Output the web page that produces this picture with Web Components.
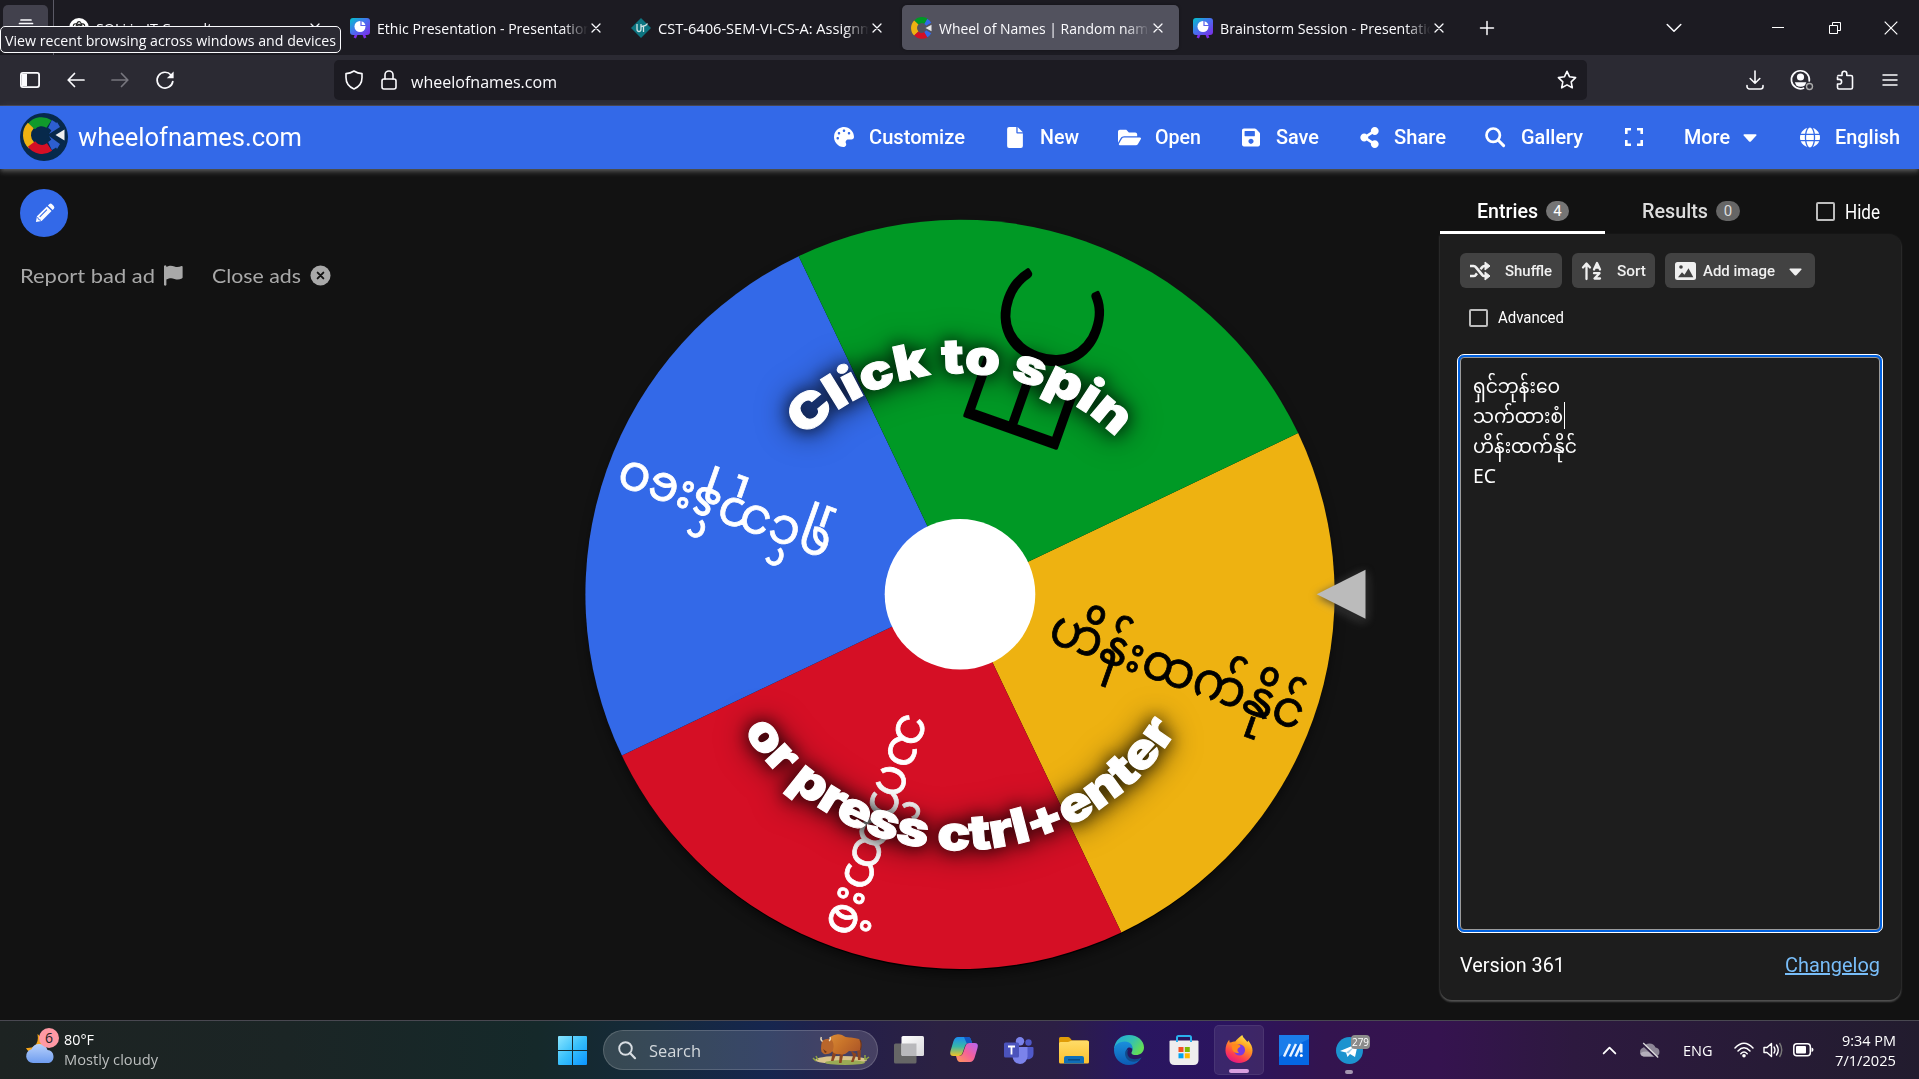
<!DOCTYPE html>
<html lang="en">
<head>
<meta charset="utf-8">
<title>Wheel of Names | Random name picker</title>
<style>
html,body{margin:0;height:100%;background:#121212;overflow:hidden}
body{font-family:"Open Sans","Noto Sans",sans-serif;color:#fbfbfe}
</style>
</head>
<body>
<wheel-desktop></wheel-desktop>
<script>
const S = (vb, body, extra='') => `<svg viewBox="${vb}" ${extra}>${body}</svg>`;
const L = (body, w=1.5) => `<g fill="none" stroke="currentColor" stroke-width="${w}" stroke-linecap="round" stroke-linejoin="round">${body}</g>`;
const deco = `<defs><linearGradient id="d" x1="0" y1="0" x2="1" y2="1"><stop offset="0" stop-color="#00c4cc"/><stop offset=".5" stop-color="#4a6df0"/><stop offset="1" stop-color="#7d2ae8"/></linearGradient></defs><path d="M6.800 15l-2 5M13.200 15l2 5" stroke="#7d2ae8" stroke-width="2.600"/><rect width="20" height="17" rx="3" fill="url(#d)"/><circle cx="10" cy="8.500" r="5.500" fill="#fff"/><path d="M11 2.500v5h5" fill="none" stroke="#5b62ec" stroke-width="1.200"/>`;
const ring = `<g fill="none" stroke-width="6"><path d="M4.300 4.500A8 8 0 0 1 14.500 3.400" stroke="#009925"/><path d="M4.300 4.500A7.800 7.800 0 0 0 4.300 15.500" stroke="#eeb211"/><path d="M4.300 15.500A7.800 7.800 0 0 0 14 16.600" stroke="#d50f25"/><path d="M13.800 16.600A7.800 7.800 0 0 0 16.700 13.700M13.800 3.400A7.800 7.800 0 0 1 16.700 6.300" stroke="#3369e8"/></g><path d="M13.500 10l6-3.200v6.400z" fill="#e6e6e6"/>`;
const ICONS = {
 recent: S('0 0 20 20', L('<path d="M5 2h10M3.500 5.500h13"/><rect x="2" y="9" width="16" height="9" rx="2"/>',1.7)),
 gpt: S('0 0 20 20','<circle cx="10" cy="10" r="10" fill="#fff"/><g fill="none" stroke="#222" stroke-width="1.200"><ellipse cx="10" cy="10" rx="3" ry="6.300"/><ellipse cx="10" cy="10" rx="3" ry="6.300" transform="rotate(60 10 10)"/><ellipse cx="10" cy="10" rx="3" ry="6.300" transform="rotate(120 10 10)"/></g>'),
 deco: S('0 0 20 20', deco),
 ut: S('0 0 20 20','<path d="M10 0l10 10-10 10L0 10z" fill="#0c7480"/><path d="M6 6v5q0 2.500 2 2.500t2-2.500V6M12.500 14V8M10.500 8.500q4 0 6-3" fill="none" stroke="#cfe3e4" stroke-width="1.300"/>'),
 wheel: S('0 0 20 20', ring),
 x: S('0 0 12 12', L('<path d="M1.200 1.200l9.600 9.600M10.800 1.200L1.200 10.800"/>',1.5)),
 plus: S('0 0 14 14', L('<path d="M7 .5v13M.5 7h13"/>',1.5)),
 down: S('0 0 16 10', L('<path d="M1.200 1.500L8 8.300l6.800-6.800"/>',1.5)),
 min: S('0 0 12 12','<path d="M0 5.500h12" stroke="#fff"/>'),
 restore: S('0 0 12 12','<path d="M3.500 3V.500h8v8H9M.500 3.500h8v8h-8z" fill="none" stroke="#fff"/>'),
 wclose: S('0 0 14 14','<path d="M.700.700l12.600 12.600M13.300.700L.700 13.300" stroke="#fff" stroke-width="1.200"/>'),
 sidebar: S('0 0 20 16','<rect x=".9" y=".9" width="18.200" height="14.200" rx="2" fill="none" stroke="currentColor" stroke-width="1.800"/><path d="M2 2h5v12H2z" fill="currentColor"/>'),
 back: S('0 0 18 16', L('<path d="M17 8H1.200M7.500 1.500L1.200 8l6.300 6.500"/>',1.7)),
 fwd: S('0 0 18 16', L('<path d="M1 8h15.800M10.500 1.500L16.800 8l-6.300 6.500"/>',1.7)),
 reload: S('0 0 18 18', L('<path d="M16.800 10.500A7.900 7.900 0 1 1 15 4"/>',1.7)+'<path d="M17.600.5v6.800h-6.800z" fill="currentColor"/>'),
 shield: S('0 0 18 20', L('<path d="M9 1c2.500 1.600 5 2.400 8 2.600v4C17 13 14 17 9 19 4 17 1 13 1 7.600v-4C4 3.400 6.500 2.600 9 1z"/>',1.6)),
 lock: S('0 0 16 20', L('<rect x="1" y="9" width="14" height="10" rx="2"/><path d="M4 9V5a4 4 0 0 1 8 0v4"/>',1.6)),
 star: S('0 0 20 20', L('<path d="M10 1.300l2.600 5.500 6 .8-4.400 4.200 1.100 6L10 14.900l-5.300 2.900 1.100-6L1.400 7.600l6-.8z"/>',1.6)),
 download: S('0 0 18 20', L('<path d="M9 1v12M4.200 8.500L9 13.200l4.800-4.700M1 15.500v1A2.500 2.500 0 0 0 3.500 19h11a2.500 2.500 0 0 0 2.500-2.500v-1"/>',1.6)),
 account: S('0 0 24 22', L('<path d="M13.500 19.200A9 9 0 1 1 19.300 12"/>',1.7)+'<circle cx="10.500" cy="8" r="3.600" fill="currentColor"/><path d="M4.800 13.200h11.600l-1.600 3.200Q10.500 19 6.300 16.400z" fill="currentColor"/><circle cx="19.500" cy="17.500" r="3" fill="none" stroke="#aaa" stroke-width="1.400"/>'),
 puzzle: S('0 0 20 20', L('<path d="M3 5.500h4V3.700a2.400 2.400 0 0 1 4.800 0v1.800H16a1.500 1.500 0 0 1 1.500 1.500v10.500A1.500 1.500 0 0 1 16 19H4a1.500 1.500 0 0 1-1.500-1.500V14h1.800a2.300 2.300 0 0 0 0-4.600H2.500V7"/>',1.6)),
 menu: S('0 0 16 14', L('<path d="M1 2h14M1 7h14M1 12h14"/>',1.5)),
 logo: S('0 0 48 48','<circle cx="24" cy="24" r="24" fill="#07294b"/><g fill="none" stroke-width="9"><path d="M11.500 13.500A13 13 0 0 1 29 11" stroke="#109a2b"/><path d="M10.800 12.500A14 14 0 0 0 11.600 32.500" stroke="#eeb211" stroke-width="8"/><path d="M11.500 31A13 13 0 0 0 29.500 34" stroke="#d50f25"/><path d="M30 33A13 13 0 0 0 35 29M30 11A13 13 0 0 1 35 15" stroke="#2d5fd0"/></g><path d="M29 21l11-7-3-5zM29 23l11 8-3 5z" fill="#2d5fd0"/><circle cx="21" cy="22" r="8" fill="#07294b"/><path d="M35.500 22l9-5.500v11z" fill="#eee"/>'),
 palette: S('0 0 512 512','<path fill="currentColor" d="M204.300 5C104.900 24.400 24.800 104.300 5.200 203.400c-37 187 131.700 326.400 258.800 306.700 41.200-6.400 61.400-54.600 42.500-91.700-23.100-45.400 9.900-98.400 60.900-98.400h79.700c35.800 0 64.800-29.600 64.900-65.300C511.500 97.100 368.100-26.900 204.300 5zM96 320c-17.700 0-32-14.300-32-32s14.300-32 32-32 32 14.300 32 32-14.300 32-32 32zm32-128c-17.700 0-32-14.300-32-32s14.300-32 32-32 32 14.300 32 32-14.300 32-32 32zm128-64c-17.700 0-32-14.300-32-32s14.300-32 32-32 32 14.300 32 32-14.300 32-32 32zm128 64c-17.700 0-32-14.300-32-32s14.300-32 32-32 32 14.300 32 32-14.300 32-32 32z"/>'),
 file: S('0 0 384 512','<path fill="currentColor" d="M224 136V0H48Q0 0 0 48v416q0 48 48 48h288q48 0 48-48V160H248q-24 0-24-24zM256 0v128h128z"/>'),
 folder: S('0 0 576 512','<path fill="currentColor" d="M572.694 292.093L500.270 416.248A63.997 63.997 0 0 1 444.989 448H45.025c-18.523 0-30.064-20.093-20.731-36.093l72.424-124.155A64 64 0 0 1 152 256h399.964c18.523 0 30.064 20.093 20.730 36.093zM152 224h328v-48c0-26.510-21.490-48-48-48H272l-64-64H48C21.490 64 0 85.490 0 112v278.046l69.077-118.418C86.214 242.250 117.989 224 152 224z"/>'),
 save: S('0 0 448 512','<path fill="currentColor" d="M433.941 129.941l-83.882-83.882A48 48 0 0 0 316.118 32H48C21.490 32 0 53.490 0 80v352c0 26.510 21.490 48 48 48h352c26.510 0 48-21.490 48-48V163.882a48 48 0 0 0-14.059-33.941zM224 416c-35.346 0-64-28.654-64-64 0-35.346 28.654-64 64-64s64 28.654 64 64c0 35.346-28.654 64-64 64zm96-304.520V212c0 6.627-5.373 12-12 12H76c-6.627 0-12-5.373-12-12V108c0-6.627 5.373-12 12-12h228.520c3.183 0 6.235 1.264 8.485 3.515l3.480 3.480A11.996 11.996 0 0 1 320 111.480z"/>'),
 share: S('0 0 448 512','<path fill="currentColor" d="M352 320c-22.608 0-43.387 7.819-59.790 20.895l-102.486-64.054a96.551 96.551 0 0 0 0-41.683l102.486-64.054C308.613 184.181 329.392 192 352 192c53.019 0 96-42.981 96-96S405.019 0 352 0s-96 42.981-96 96c0 7.158.790 14.130 2.276 20.841L155.790 180.895C139.387 167.819 118.608 160 96 160c-53.019 0-96 42.981-96 96s42.981 96 96 96c22.608 0 43.387-7.819 59.790-20.895l102.486 64.054A96.301 96.301 0 0 0 256 416c0 53.019 42.981 96 96 96s96-42.981 96-96-42.981-96-96-96z"/>'),
 search: S('0 0 20 20','<circle cx="8.200" cy="8.200" r="6.700" fill="none" stroke="currentColor" stroke-width="2.700"/><path d="M13.300 13.300l5.300 5.300" stroke="currentColor" stroke-width="3" stroke-linecap="round"/>'),
 full: S('0 0 18 18','<path d="M1.300 6V1.300H6M12 1.300h4.700V6M16.700 12v4.700H12M6 16.700H1.300V12" fill="none" stroke="currentColor" stroke-width="2.600"/>'),
 caret: S('0 0 14 8','<path d="M1.200.300h11.600q1.300.200.500 1.300L7.900 7.400q-.9.800-1.800 0L.700 1.600Q-.1.500 1.200.300z" fill="currentColor"/>'),
 globe: S('0 0 496 512','<path fill="currentColor" d="M336.500 160C322 70.700 287.800 8 248 8s-74 62.700-88.500 152h177zM152 256c0 22.200 1.200 43.500 3.300 64h185.300c2.100-20.500 3.300-41.800 3.300-64s-1.200-43.500-3.300-64H155.300c-2.100 20.500-3.300 41.800-3.300 64zm324.700-96c-28.600-67.900-86.500-120.400-158-141.600 24.400 33.800 41.200 84.700 50 141.600h108zM177.200 18.400C105.800 39.600 47.800 92.100 19.300 160h108c8.700-56.900 25.500-107.800 49.900-141.600zM487.400 192H372.700c2.100 21 3.300 42.500 3.300 64s-1.200 43-3.300 64h114.600c5.500-20.500 8.600-41.800 8.600-64s-3.100-43.500-8.500-64zM120 256c0-21.500 1.200-43 3.300-64H8.600C3.200 212.500 0 233.800 0 256s3.200 43.500 8.600 64h114.600c-2-21-3.200-42.500-3.200-64zm39.500 96c14.500 89.300 48.700 152 88.500 152s74-62.700 88.500-152h-177zm159.300 141.600c71.400-21.200 129.400-73.700 158-141.600h-108c-8.800 56.900-25.600 107.800-50 141.600zM19.300 352c28.600 67.900 86.500 120.400 158 141.600-24.400-33.800-41.200-84.700-50-141.600h-108z"/>'),
 pencil: S('0 0 22 22','<path d="M2 20l1.100-6L13.500 3.600l4.900 4.900L8 18.900zM14.600 2.500l1.300-1.300q1.600-1.200 3 .1l1.800 1.800q1.300 1.400.1 3l-1.300 1.300z" fill="currentColor"/><path d="M6 14.500L13.500 7" stroke="#3369e8" stroke-width="1.200"/><path d="M3.700 14.800l1.100 2.400 2.400 1" fill="none" stroke="#3369e8"/>'),
 flag: S('0 0 20 22','<path d="M0 1q1.200-1.400 2.500 0v1C6 .3 8 .5 11 1.600s5 .4 7.500-.6q1-.3 1.100.7v11.500q-.1.700-.8 1c-3 1.400-5 1.300-7.800.4s-5-1-8.500.6V21q-1.200 1.500-2.500 0z" fill="currentColor"/>'),
 cx: S('0 0 22 22','<circle cx="11" cy="11" r="10.500" fill="currentColor"/><path d="M8 8l6 6M14 8l-6 6" stroke="#121212" stroke-width="2" stroke-linecap="round"/>'),
 shuffle: S('0 0 20 18','<path d="M0 4h3.500q1.500 0 2.300 1.100l6.400 7.800q.8 1.100 2.300 1.100H16M0 14h3.500q1.500 0 2.300-1.100l1.200-1.500M10.500 7.200l1.700-2.100Q13 4 14.500 4H16" fill="none" stroke="currentColor" stroke-width="2.600"/><path d="M15 0l5 4-5 4zM15 10l5 4-5 4z" fill="currentColor" stroke="currentColor" stroke-linejoin="round"/>'),
 sort: S('0 0 20 18','<path d="M4.500 17V3M1 5.500l3.500-4 3.500 4M12 7.500L15 1l3 6.500M13 5.500h4M12 11.200h5.500L12.500 16.500H18" fill="none" stroke="currentColor" stroke-width="2.300" stroke-linecap="round" stroke-linejoin="round"/>'),
 image: S('0 0 21 18','<rect width="21" height="18" rx="2.500" fill="currentColor"/><circle cx="6" cy="5" r="1.800" fill="#424242"/><path d="M3 15.200l4-5 2.500 2.500 4-6.500 4.800 9z" fill="#424242"/>'),
 weather: S('0 0 32 32','<defs><linearGradient id="c" x2="0" y2="1"><stop offset="0" stop-color="#b9d2fb"/><stop offset="1" stop-color="#6f9df0"/></linearGradient></defs><path d="M12.500 0q1.500 8-3 12-3 2.500-8.500 2 2 5 9 5 6-1 9-6 1-8-6.500-13z" fill="#f3a41c"/><path d="M8 29a7 7 0 0 1-1.500-13.800A8.500 8.500 0 0 1 22.500 16 6.700 6.700 0 0 1 24 29z" fill="url(#c)"/>'),
 start: S('0 0 29 29','<defs><linearGradient id="w" x2="1" y2="1"><stop offset="0" stop-color="#8be6ff"/><stop offset=".5" stop-color="#37bffb"/><stop offset="1" stop-color="#0a94ff"/></linearGradient></defs><path d="M0 1q0-1 1-1h13v14H0zM15 0h13q1 0 1 1v13H15zM0 15h14v14H1q-1 0-1-1zM15 15h14v13q0 1-1 1H15z" fill="url(#w)"/>'),
 glass: S('0 0 18 18','<circle cx="7.500" cy="7.500" r="6.300" fill="none" stroke="#d8dde2" stroke-width="1.900"/><path d="M12 12l5 5.200" stroke="#d8dde2" stroke-width="2.200" stroke-linecap="round"/>'),
 bison: S('0 0 56 32','<defs><linearGradient id="b" x2="1" y2=".6"><stop offset="0" stop-color="#d98a35"/><stop offset=".5" stop-color="#c77229"/><stop offset="1" stop-color="#b05a28"/></linearGradient></defs><ellipse cx="28" cy="26" rx="26" ry="4" fill="#d9c48c"/><ellipse cx="32" cy="28.500" rx="20" ry="2.600" fill="#9aab55"/><path d="M0 24l3 3M3 22l2 4M52 21v5M56 23l-4 3" stroke="#8fa344" stroke-width="1.500"/><path d="M20 17l-2 10h2.500l3-8M27 18l-1 11h2.500l2-10M38 17l2 5-2 6h2.500l3-8M44 14l1 12h2.500l.5-15" fill="#8d4520"/><path d="M17 3Q23-1 29 1q4 3 9 2.500 5 .5 8 1.500 3 3 2 8l-1 3q-5 2-11 1-5 5-9 3-5 1-8-3z" fill="url(#b)"/><path d="M47 6q2 3 .5 10" fill="none" stroke="#6d3417" stroke-width="1.100"/><path d="M9 7q4-3 9-2 4 5 2 11-2 4-6 4-3 1-4-1-2-1-2-4 0-4 1-8z" fill="#b9662b"/><path d="M9.500 7.500Q7 6 8.300 3M16 7q2-1 1-4" fill="none" stroke="#f0e0c0" stroke-width="1.300"/><path d="M10 15l2 4 2-1z" fill="#6d3417"/>'),
 taskview: S('0 0 30 28','<defs><linearGradient id="t" x2="1" y2="1"><stop offset="0" stop-color="#fff"/><stop offset="1" stop-color="#d9d9dc"/></linearGradient></defs><rect y="7.500" width="22.500" height="20" rx="1.500" fill="#666"/><rect x="7.500" width="22.500" height="20" rx="1.500" fill="url(#t)"/><path d="M7.500 7.500h15v12.500H9q-1.500 0-1.500-1.500z" fill="#b9b9bc"/>'),
 copilot: S('0 0 28 26','<defs><linearGradient id="p" x2="0" y2="1"><stop offset="0" stop-color="#1b8cf0"/><stop offset=".5" stop-color="#38b7a8"/><stop offset="1" stop-color="#f3c326"/></linearGradient><linearGradient id="q" x1="1" x2="0" y2="1"><stop offset="0" stop-color="#b465f5"/><stop offset=".5" stop-color="#f5609a"/><stop offset="1" stop-color="#ff9a55"/></linearGradient></defs><path d="M8 0h10q2.500 0 3.400 4l.6 2h-3q-3 0-4 3l-2.500 7q-1 3-4 3H3.500q-4.500 0-3-5L3.500 4Q5 0 8 0z" fill="url(#p)"/><path d="M14 0h4q2.500 0 3.400 4l.6 2h-5.500z" fill="#1257c4"/><path d="M20 25H10q-2.500 0-3.400-4L6 19h3q3 0 4-3l2.500-7q1-3 4-3h5q4.500 0 3 5l-3 10q-1.500 4-4.500 4z" fill="url(#q)"/>'),
 teams: S('0 0 30 27','<circle cx="24.500" cy="5.500" r="3.200" fill="#5059c9"/><circle cx="16" cy="4.200" r="4.200" fill="#7b83eb"/><path d="M21 10h7.500q1 0 1 1v6a5.500 5.500 0 0 1-9 4z" fill="#5059c9"/><path d="M9 10h14.500v9.500a7.500 7.500 0 0 1-15 0z" fill="#7b83eb"/><rect y="5.500" width="15" height="15" rx="1.500" fill="#4b53bc"/><path d="M4 9.500h7M7.500 9.500v8" stroke="#fff" stroke-width="1.800"/>'),
 explorer: S('0 0 30 27','<defs><linearGradient id="f" x2="0" y2="1"><stop offset="0" stop-color="#ffdc68"/><stop offset="1" stop-color="#fbc02e"/></linearGradient></defs><path d="M0 1.500Q0 0 1.500 0H9q1 0 2 1l2 2.500h15q2 0 2 2V12H0z" fill="#e09c08"/><path d="M0 6.500q0-1.500 1.500-1.500H9l4-1.500h15q2 0 2 2V25q0 1.500-1.500 1.500h-27Q0 26.500 0 25z" fill="url(#f)"/><path d="M5 26.500V21q0-2 2-2h16q2 0 2 2v5.500z" fill="#0f6fb8"/><path d="M9 22.800h12" stroke="#0a4a82" stroke-width="1.500"/>'),
 edge: S('0 0 30 30','<defs><linearGradient id="e" x2="1" y2=".5"><stop offset="0" stop-color="#1fa8e0"/><stop offset=".6" stop-color="#35c1b0"/><stop offset="1" stop-color="#62dc58"/></linearGradient><linearGradient id="g" x2="0" y2="1"><stop offset="0" stop-color="#1a8fdc"/><stop offset="1" stop-color="#0c5cb4"/></linearGradient></defs><path d="M0 14C1 5 7 0 15 0c9 0 15 6 15 12.500 0 5-4 7.500-8 7.500-5 0-5-2-4-3.500 1.500-3-1-7.500-6-7.500Q4 8 0 14z" fill="url(#e)"/><path d="M0 15C0 10 5 6.500 11 6.500c5 0 8.500 4 7.500 8.500-1-3-4-3-5.500-1-3 4 0 12 8 11 3 0 5-1 6.500-2.500C25 27 21 30 15 30 6 30 0 23 0 15z" fill="url(#g)"/><path d="M11.500 16c-2 7 4 12 10 10.500 3-.5 5-2.500 6-4-6 3-13 2-14-3.500-.3-2 .3-3.700 1-4.500q-2 0-3 1.500z" fill="#114a8b"/>'),
 store: S('0 0 30 30','<path d="M8 9V2.500Q8 1 9.500 1h11Q22 1 22 2.500V9" fill="none" stroke="#2ab0ee" stroke-width="2"/><path d="M.5 6.500Q.5 5.500 1.500 5.500h27q1 0 1 1V25q0 5-5 5h-19q-5 0-5-5z" fill="#eee"/><path d="M8 4v3M22 4v3" stroke="#2ab0ee" stroke-width="2"/><path d="M9.500 12h5v5h-5z" fill="#f25022"/><path d="M15.800 12h5v5h-5z" fill="#7fba00"/><path d="M9.500 18.300h5v5h-5z" fill="#00a4ef"/><path d="M15.800 18.300h5v5h-5z" fill="#ffb900"/>'),
 firefox: S('0 0 30 30','<defs><linearGradient id="h" x1=".8" x2=".3" y2="1"><stop offset="0" stop-color="#fff14f"/><stop offset=".4" stop-color="#ff9a1f"/><stop offset=".75" stop-color="#ff3d4f"/><stop offset="1" stop-color="#e31587"/></linearGradient></defs><path d="M18.500 0c1 3.500 4 5 5.500 7.500l1-1.500c3 4 4.500 7 4.500 10.500C29.500 24 23 30 15 30S.500 24 .500 16.500C.500 12 2 8 4.500 5l.5 3 2-.2q2-1.300 4-.8C12 5 16 2 18.500 0z" fill="url(#h)"/><circle cx="15.500" cy="16" r="6" fill="#7a3be0"/><path d="M7 11q4-2 8-.5 2 1 1.500 2-2 1-3 2.500-1 2.500 1.500 4-5 1-7-3z" fill="#ff8a1c"/>'),
 armoury: S('0 0 30 30','<path d="M0 0h30v30H0z" fill="#0567e2"/><path d="M0 0h30v4q-14 6-30 18z" fill="#2488ee" opacity=".7"/><path d="M5 21.500L11 9M11 21.500L17 9M16.500 21.500L22.300 9v8.500" fill="none" stroke="#e8f3ff" stroke-width="2.500"/><circle cx="22.300" cy="20.500" r="1.500" fill="#fff"/>'),
 telegram: S('0 0 27 27','<circle cx="13.500" cy="13.500" r="13.500" fill="#1c93cf"/><path d="M4 14L22 6.500 19 20l-5-3-2.500 3-1.500-4.500z" fill="#fff"/><path d="M10 15.500L19 9l-6.500 7.500z" fill="#9fcbe6"/>'),
 up: S('0 0 16 10', L('<path d="M1.500 8.300L8 1.800l6.500 6.500"/>',2)),
 cloud: S('0 0 22 18','<path d="M5 15.500a4.600 4.600 0 0 1-.5-9A6.500 6.500 0 0 1 16.500 6.500 4.600 4.600 0 0 1 17 15.500z" fill="#8e8797"/><path d="M4.500 15.500q-3-1-3-3.500 8-4 15 3.500z" fill="#b5afbc"/><path d="M3.200 3L18 17" stroke="#2b193d" stroke-width="2.200"/><path d="M4.200 2l15 14.500" stroke="#ddd" stroke-width="1.300"/>'),
 wifi: S('0 0 20 16','<g fill="none" stroke="#fff" stroke-width="1.500" stroke-linecap="round"><path d="M1 6Q10-3.500 19 6M4 9Q10 2.500 16 9M6.800 11.700Q10 8.500 13.200 11.700"/></g><circle cx="10" cy="13.800" r="1.800" fill="#fff"/>'),
 sound: S('0 0 20 16','<path d="M1 5.500h3L8.500 1.500v13L4 10.500H1z" fill="none" stroke="#fff" stroke-width="1.400" stroke-linejoin="round"/><path d="M11 5q2 3 0 6M13.500 3q3.500 5 0 10" fill="none" stroke="#fff" stroke-width="1.400" stroke-linecap="round"/><path d="M16.500 1q4.500 7 0 14" fill="none" stroke="#777" stroke-width="1.400"/>'),
 battery: S('0 0 21 14','<rect x=".8" y=".8" width="16.500" height="12" rx="3" fill="none" stroke="#fff" stroke-width="1.500"/><rect x="3" y="3" width="10" height="7.600" rx="1" fill="#fff"/><path d="M18.500 4.500q2 .5 2 2.300t-2 2.300z" fill="#fff"/>')
};
const define = (name, css, html, init) => customElements.define(name, class extends HTMLElement {
  connectedCallback() {
    if (this.shadowRoot) return;
    const root = this.attachShadow({mode: 'open'});
    const t = document.createElement('template');
    t.innerHTML = `<style>*{box-sizing:border-box}${css}</style>` + (typeof html === 'function' ? html(this) : html);
    root.append(t.content.cloneNode(true));
    if (init) init(this, root);
  }
});
const A = (e, n, d='') => e.getAttribute(n) ?? d;

/* ui-icon: name, w, h */
define('ui-icon', ':host{display:inline-flex;flex:none}svg{display:block;width:100%;height:100%;overflow:visible}', e => ICONS[A(e,'name')] || '', e => {
  e.style.width = A(e,'w','20') + 'px'; e.style.height = A(e,'h',A(e,'w','20')) + 'px';
});
/* fit-text: a line of text set to an exact advance width */
define('fit-text', ':host{display:inline-block;flex:none;white-space:nowrap}span{display:inline-block;transform-origin:0 50%}:host([u]) span{text-decoration:underline}', '<span><slot></slot></span>', (e, r) => {
  const s = r.querySelector('span'), w = +A(e,'w');
  const n = s.getBoundingClientRect().width;
  e.style.width = w + 'px';
  if (n) s.style.transform = `scaleX(${w / n})`;
});

/* ---------- browser chrome ---------- */
define('browser-tab', `
:host{display:flex;align-items:center;width:277px;height:45px;flex:none;border-radius:5px;padding-left:10px;font-size:15px;line-height:20px}
:host([active]){background:#52525e;box-shadow:0 0 3px #0006}
.t{width:211px;margin-left:7px;overflow:hidden;white-space:nowrap;-webkit-mask-image:linear-gradient(90deg,#000 88%,transparent);mask-image:linear-gradient(90deg,#000 88%,transparent)}
.c{margin-left:3px}`,
e => `<ui-icon name="${A(e,'icon')}" w="20"></ui-icon><div class="t"><fit-text w="${A(e,'tw')}"><slot></slot></fit-text></div><ui-icon class="c" name="x" w="10"></ui-icon>`);

define('tab-strip', `
:host{display:flex;align-items:center;height:55px;background:#1c1b22;position:relative}
.rec{width:45px;height:45px;margin-left:3px;background:#42414d;border-radius:5px;display:flex;justify-content:center;align-items:center}
.sep{width:1px;height:55px;background:#5b5a66;margin:0 5px}
.tabs{display:flex;gap:4px}
.tip{position:absolute;left:0;top:26px;width:341px;height:27px;border:1.500px solid #fbfbfe;border-radius:5px;background:#2b2a33;padding-left:4px;line-height:26px;font-size:15px;z-index:3}
.plus{margin-left:20px}.down{margin-left:172px}.m{margin-left:90px}.r{margin-left:45px}.x{margin-left:43px}`,
`<div class="rec"><ui-icon name="recent" w="20"></ui-icon></div><div class="sep"></div>
<div class="tabs">
<browser-tab icon="gpt" tw="147">SQLi in IT Consultancy</browser-tab>
<browser-tab icon="deco" tw="215">Ethic Presentation - Presentation</browser-tab>
<browser-tab icon="ut" tw="238">CST-6406-SEM-VI-CS-A: Assignment</browser-tab>
<browser-tab icon="wheel" tw="217" active>Wheel of Names | Random name</browser-tab>
<browser-tab icon="deco" tw="224">Brainstorm Session - Presentation</browser-tab>
</div>
<ui-icon class="plus" name="plus" w="14"></ui-icon><ui-icon class="down" name="down" w="16" h="10"></ui-icon>
<ui-icon class="m" name="min" w="12"></ui-icon><ui-icon class="r" name="restore" w="12"></ui-icon><ui-icon class="x" name="wclose" w="14"></ui-icon>
<div class="tip"><fit-text w="331">View recent browsing across windows and devices</fit-text></div>`);

define('nav-bar', `
:host{display:flex;align-items:center;height:51px;background:#2b2a33;border-bottom:1px solid #42414d;padding:0 21px 0 20px}
.l{display:flex;align-items:center;width:314px}
.l ui-icon+ui-icon{margin-left:26.500px}
.dim{color:#77767e}
.url{display:flex;align-items:center;width:1253px;height:40px;border-radius:5px;background:#1c1b22;padding:0 10px 0 11px;font-size:17px;line-height:24px}
.url .lk{margin-left:18px}.url fit-text{margin-left:14px;padding-top:4px}.st{margin-left:auto}
.rt{margin-left:auto;display:flex;align-items:center}`,
`<div class="l"><ui-icon name="sidebar" w="20" h="16"></ui-icon><ui-icon name="back" w="18" h="16"></ui-icon><ui-icon class="dim" name="fwd" w="18" h="16"></ui-icon><ui-icon name="reload" w="18"></ui-icon></div>
<div class="url"><ui-icon name="shield" w="18" h="20"></ui-icon><ui-icon class="lk" name="lock" w="16" h="20"></ui-icon><fit-text w="146">wheelofnames.com</fit-text><ui-icon class="st" name="star" w="20"></ui-icon></div>
<div class="rt"><ui-icon name="download" w="18" h="20"></ui-icon><ui-icon name="account" w="24" h="22" style="margin-left:26px"></ui-icon><ui-icon name="puzzle" w="20" style="margin-left:21px"></ui-icon><ui-icon name="menu" w="16" h="14" style="margin-left:27px"></ui-icon></div>`);

/* ---------- site header ---------- */
define('menu-item', ':host{display:flex;align-items:center;flex:none}', e => `${A(e,'icon')?`<ui-icon name="${A(e,'icon')}" w="${A(e,'iw')}" h="${A(e,'ih','21')}"></ui-icon>`:''}${A(e,'tw')?`<fit-text w="${A(e,'tw')}" style="margin-left:${A(e,'g','0')}px"><slot></slot></fit-text>`:''}${A(e,'caret')?'<ui-icon name="caret" w="14" h="8" style="margin-left:13px;margin-top:2px"></ui-icon>':''}`);
define('site-header', `
:host{display:flex;align-items:center;height:63px;background:#3369e8;color:#fff;font-family:Roboto,sans-serif;padding:0 19px 1px 20px;position:relative;z-index:1;box-shadow:0 2px 4px -1px #fff3,0 4px 5px #fff2,0 1px 10px #fff1}
.b{font-size:26px;line-height:32px;margin-left:9.500px}
nav{display:flex;align-items:center;margin-left:auto;font-size:20px;font-weight:500;line-height:26px}`,
`<ui-icon name="logo" w="48"></ui-icon><fit-text class="b" w="224">wheelofnames.com</fit-text>
<nav>
<menu-item icon="palette" iw="20" ih="20" g="15" tw="96">Customize</menu-item>
<menu-item icon="file" iw="16" g="17" tw="39" style="margin-left:42px">New</menu-item>
<menu-item icon="folder" iw="23" g="14" tw="46" style="margin-left:39px">Open</menu-item>
<menu-item icon="save" iw="18" g="16" tw="43" style="margin-left:41px">Save</menu-item>
<menu-item icon="share" iw="19" g="15" tw="52" style="margin-left:41px">Share</menu-item>
<menu-item icon="search" iw="20" ih="20" g="16" tw="62" style="margin-left:39px">Gallery</menu-item>
<menu-item icon="full" iw="18" ih="18" style="margin-left:42px"></menu-item>
<menu-item tw="46" caret="1" style="margin-left:41px">More</menu-item>
<menu-item icon="globe" iw="20" g="15" tw="65" style="margin-left:43px">English</menu-item>
</nav>`);

/* ---------- left column ---------- */
define('left-column', `
:host{display:block;width:560px;padding:20px 0 0 20px}
.e{width:48px;height:48px;border-radius:50%;background:#3369e8;display:flex;align-items:center;justify-content:center}
.r{display:flex;align-items:center;height:26px;margin-top:25px;color:#a8a8a8;font:400 20px/26px Lato,sans-serif}`,
`<div class="e"><ui-icon name="pencil" w="21"></ui-icon></div>
<div class="r"><fit-text w="135">Report bad ad</fit-text><ui-icon name="flag" w="19" h="21" style="margin-left:9px"></ui-icon><fit-text w="89" style="margin-left:29px">Close ads</fit-text><ui-icon name="cx" w="21" style="margin-left:9px"></ui-icon></div>`);

/* ---------- the wheel ---------- */
const P = (r, d) => `${(r*Math.cos(d*Math.PI/180)).toFixed(2)} ${(r*Math.sin(d*Math.PI/180)).toFixed(2)}`;
const slice = (a, c) => `<path d="M0 0L${P(374.6,a)}A374.6 374.6 0 0 1 ${P(374.6,a+90)}z" fill="${c}"/>`;
const label = (a, t, c, s, x, w) => `<text transform="rotate(${a})" x="${x}" y="15.500" font-size="${s}" fill="${c}" stroke="${c}" stroke-width=".8" textLength="${w}" lengthAdjust="spacingAndGlyphs">${t}</text>`;
define('name-wheel', `
:host{display:block;width:820px;height:851px}
svg{display:block;overflow:visible}
.my text{font-family:"Noto Sans Myanmar","Padauk","Noto Sans",sans-serif}
.cap{font:900 48px Inter,"Liberation Sans",sans-serif;fill:#fff;stroke:#fff;stroke-width:1;filter:drop-shadow(0 0 8px #000a) drop-shadow(0 2px 14px #000a)}`,
`<svg width="820" height="851" viewBox="-400 -425.300 820 851">
<defs><path id="up" d="M${P(221,-150)}A221 221 0 0 1 ${P(221,-30)}"/><path id="dn" d="M${P(256,165)}A256 256 0 0 0 ${P(256,15)}"/></defs>
<circle cy="3" r="373" style="filter:drop-shadow(0 4px 6px #0008)"/>
${slice(-25.500,'#eeb211')}${slice(64.500,'#d50f25')}${slice(154.500,'#3369e8')}${slice(244.500,'#009925')}
<g class="my">${label(19.500,'ဟိန်းထက်နိုင်','#000',50.5,97,267)}${label(109.500,'သက်ထားစံ','#fff',50.5,129,232)}${label(199.500,'ရှင်ဘုန်းဝေ','#fff',50.5,139,223)}</g>
<text transform="rotate(-70.500)" x="155" y="42" font-family="Lato" font-weight="300" font-size="137" fill="#000" stroke="#000" stroke-width="3.500" stroke-linejoin="round" textLength="180" lengthAdjust="spacingAndGlyphs">EC</text>
<circle r="75.300" fill="#fff"/>
<path d="M356.700 0L405.500-24.500v49z" fill="#bbb" style="filter:drop-shadow(0 2px 4px #0009) drop-shadow(0 2px 5px #fff4)"/>
<text class="cap" text-anchor="middle" textLength="346" lengthAdjust="spacingAndGlyphs"><textPath href="#up" startOffset="50%" textLength="346" lengthAdjust="spacingAndGlyphs">Click to spin</textPath></text>
<text class="cap" text-anchor="middle" textLength="516" lengthAdjust="spacingAndGlyphs"><textPath href="#dn" startOffset="50%" textLength="516" lengthAdjust="spacingAndGlyphs">or press ctrl+enter</textPath></text>
</svg>`);

/* ---------- entries panel ---------- */
define('check-box', `:host{display:flex;align-items:center}i{width:19px;height:18.500px;border:2px solid #bdbdbd;border-radius:2px}`, e => `<i></i><fit-text w="${A(e,'tw')}" style="margin-left:10px"><slot></slot></fit-text>`);
define('tool-button', `:host{display:flex;align-items:center;height:35px;border-radius:6px;background:#424242;color:#f0f0f0;padding-left:10px;font-size:15.500px;font-weight:500;line-height:20px}`,
e => `<ui-icon name="${A(e,'icon')}" w="${A(e,'iw','20')}" h="18"></ui-icon><fit-text w="${A(e,'tw')}" style="margin-left:${A(e,'g')}px"><slot></slot></fit-text>${A(e,'caret')?'<ui-icon name="caret" w="13" h="8" style="margin:2px 0 0 14px"></ui-icon>':''}`);
define('entries-panel', `
:host{display:block;width:461px;margin:32px 0 0 60px;font-family:Roboto,"Noto Sans Myanmar",sans-serif;color:#fff}
.tabs{display:flex;align-items:center;height:33px;font-size:20px;font-weight:500;line-height:24px}
.tab{display:flex;align-items:center;width:165px;height:33px;padding-left:37px;padding-bottom:11px;border-bottom:3px solid transparent}
.on{border-color:#fff}.off{color:#ddd}
b{font-weight:400;font-size:15px;background:#757575;border-radius:10px;width:23px;height:20px;line-height:20px;text-align:center;margin-left:8px}
.off b{background:#666;width:24px}
.hide{font-weight:400;margin-left:46px;padding-bottom:12px}
.card{height:766px;border-radius:0 12px 12px 12px;background:#1d1d1d;box-shadow:0 2px 2px #fff3,0 1px 3px #fff2;padding:19px 20px 0}
.tools{display:flex;gap:10px}
.adv{margin:20px 0 0 9px;font-size:16px;line-height:20px}
.ta{margin:26px -2px 0 -3px;height:579px;border:1px solid #fff;border-radius:7px;background:#0061e0;padding:2px}
.in{height:100%;border:1px solid #9a9a9a;border-radius:4px;background:#1d1d1d;padding:12.500px 0 0 12px;font:19px/30px "Noto Sans","Noto Sans Myanmar",sans-serif}
.ln{display:flex;align-items:center;height:30px}
.caret{width:1px;height:27px;background:#fff;margin-left:1px}
.ft{display:flex;justify-content:space-between;margin:19px 1px 0 0;font-size:20px;line-height:26px}
.ft a{color:#78bdf8}`,
`<div class="tabs"><div class="tab on"><fit-text w="61">Entries</fit-text><b>4</b></div><div class="tab off"><fit-text w="66">Results</fit-text><b>0</b></div><check-box class="hide" tw="35">Hide</check-box></div>
<div class="card">
<div class="tools"><tool-button icon="shuffle" g="15" tw="47" style="width:102px">Shuffle</tool-button><tool-button icon="sort" g="15" tw="29" style="width:83px">Sort</tool-button><tool-button icon="image" iw="21" g="7" tw="72" caret="1" style="width:150px">Add image</tool-button></div>
<check-box class="adv" tw="66">Advanced</check-box>
<div class="ta"><div class="in"><div class="ln"><fit-text w="87">ရှင်ဘုန်းဝေ</fit-text></div><div class="ln"><fit-text w="90">သက်ထားစံ</fit-text><div class="caret"></div></div><div class="ln"><fit-text w="104">ဟိန်းထက်နိုင်</fit-text></div><div class="ln"><fit-text w="23">EC</fit-text></div></div></div>
<div class="ft"><fit-text w="105">Version 361</fit-text><a><fit-text w="95" u>Changelog</fit-text></a></div>
</div>`);

define('wheel-page', ':host{display:flex;flex:1;min-height:0;background:#121212}', '<left-column></left-column><name-wheel></name-wheel><entries-panel></entries-panel>');

/* ---------- taskbar ---------- */
define('task-bar', `
:host{display:flex;align-items:center;height:59px;border-top:1px solid #494851;background:linear-gradient(90deg,#1d2322 0,#1b2525 15%,#15292a 28%,#152a3b 34%,#16264f 40%,#241f4a 44%,#2b2142 49%,#2c1f45 55%,#291660 59%,#2b145f 64%,#33144f 69%,#35134f 75%,#2d193f 82%,#271b36 92%,#221c2e 100%);color:#fff;position:relative}
.we{display:flex;width:558px;padding-left:25px;align-items:center}
.wi{position:relative;height:32px}
.bd{position:absolute;left:14px;top:-6px;width:20px;height:20px;border-radius:50%;background:#ff99a4;color:#222;font-size:14px;line-height:20px;text-align:center}
.wt{margin-left:7px;font-size:14.500px;line-height:20px;display:flex;flex-direction:column}
.wt fit-text+fit-text{color:#bcbfbf}
.s{display:flex;align-items:center;width:275px;height:40px;margin-left:16px;border-radius:20px;border:1px solid #ffffff2a;background:#ffffff26;padding:0 8px 0 14px;font-size:17px;line-height:24px;color:#d3d8dc}
.s fit-text{margin-left:12.500px;padding-top:1px}.s .bi{margin-left:auto}
.a{display:flex;align-items:center;margin-left:16px}
.cell{width:50px;height:50px;margin-right:5px;display:flex;align-items:center;justify-content:center;position:relative;border-radius:5px}
.a .cell:first-child{width:30px;margin-right:15px}
.ff{background:#ffffff14;border:1px solid #ffffff12}
.u{position:absolute;bottom:1px;height:4px;border-radius:2px;background:#d9a0e0;width:20px}
.u.g{width:8px;background:#a496b0}
.n{position:absolute;left:27px;top:10px;width:19px;height:14px;border-radius:4px;background:#8c8c8c;font-size:11px;line-height:14px;text-align:center}
.t{margin-left:auto;display:flex;align-items:center;padding-right:23px;font-size:15px;line-height:20px}
.ck{display:flex;flex-direction:column;align-items:flex-end;margin-left:21px;padding-bottom:1px}`,
`<div class="we"><div class="wi"><ui-icon name="weather" w="32"></ui-icon><div class="bd">6</div></div><div class="wt"><fit-text w="30">80°F</fit-text><fit-text w="94">Mostly cloudy</fit-text></div></div>
<ui-icon name="start" w="29"></ui-icon>
<div class="s"><ui-icon name="glass" w="18"></ui-icon><fit-text w="52">Search</fit-text><ui-icon class="bi" name="bison" w="56" h="32"></ui-icon></div>
<div class="a">
<div class="cell"><ui-icon name="taskview" w="30" h="28"></ui-icon></div>
<div class="cell"><ui-icon name="copilot" w="28" h="26"></ui-icon></div>
<div class="cell"><ui-icon name="teams" w="30" h="27"></ui-icon></div>
<div class="cell"><ui-icon name="explorer" w="30" h="27"></ui-icon></div>
<div class="cell"><ui-icon name="edge" w="30"></ui-icon></div>
<div class="cell"><ui-icon name="store" w="30"></ui-icon></div>
<div class="cell ff"><ui-icon name="firefox" w="28" style="margin-bottom:3px"></ui-icon><div class="u"></div></div>
<div class="cell"><ui-icon name="armoury" w="30"></ui-icon></div>
<div class="cell"><ui-icon name="telegram" w="27"></ui-icon><div class="n"><fit-text w="17">279</fit-text></div><div class="u g"></div></div>
</div>
<div class="t"><ui-icon name="up" w="15" h="9"></ui-icon><ui-icon name="cloud" w="22" h="18" style="margin-left:22px"></ui-icon><fit-text w="29.500" style="margin-left:22px">ENG</fit-text><ui-icon name="wifi" w="20" h="16" style="margin-left:22px"></ui-icon><ui-icon name="sound" w="20" h="16" style="margin-left:9px"></ui-icon><ui-icon name="battery" w="21" h="14" style="margin-left:10px"></ui-icon><div class="ck"><fit-text w="54">9:34 PM</fit-text><fit-text w="61">7/1/2025</fit-text></div></div>`);

define('wheel-desktop', ':host{display:flex;flex-direction:column;width:1919px;height:1079px;overflow:hidden}tab-strip,nav-bar,site-header,task-bar{flex:none}', '<tab-strip></tab-strip><nav-bar></nav-bar><site-header></site-header><wheel-page></wheel-page><task-bar></task-bar>');
</script>
</body>
</html>
